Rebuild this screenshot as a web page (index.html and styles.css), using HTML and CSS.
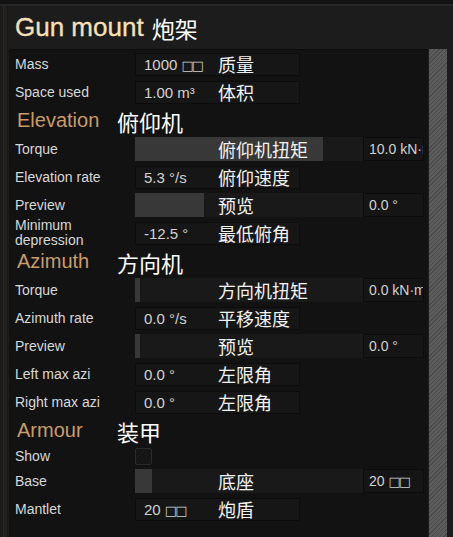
FILE: index.html
```html
<!DOCTYPE html>
<html lang="en">
<head>
    <meta charset="UTF-8">
    <meta name="viewport" content="width=device-width, initial-scale=1.0">
    <title>Gun mount</title>
    <link rel="stylesheet" href="styles.css">
</head>
<body>

<div class="topbar"></div>
<div class="screen">
    <div class="edge"></div>
    <div class="window">
        <h1 class="title">Gun mount <span class="cn">炮架</span></h1>

        <div class="content">
            <div class="list">
                <div class="row">
                    <div class="label">Mass</div>
                    <div class="ctrl">
                        <div class="field">1000 <span class="tofu">□□</span></div>
                        <div class="cn-label">质量</div>
                    </div>
                </div>
                <div class="row">
                    <div class="label">Space used</div>
                    <div class="ctrl">
                        <div class="field">1.00 m³</div>
                        <div class="cn-label">体积</div>
                    </div>
                </div>

                <div class="section">
                    <span class="section-name">Elevation</span>
                    <span class="section-cn">俯仰机</span>
                </div>
                <div class="row">
                    <div class="label">Torque</div>
                    <div class="ctrl slider-ctrl">
                        <div class="track"><div class="fill" style="width: 188px"></div></div>
                        <div class="cn-label">俯仰机扭矩</div>
                        <div class="num">10.0 kN·m</div>
                    </div>
                </div>
                <div class="row">
                    <div class="label">Elevation rate</div>
                    <div class="ctrl">
                        <div class="field">5.3 °/s</div>
                        <div class="cn-label">俯仰速度</div>
                    </div>
                </div>
                <div class="row">
                    <div class="label">Preview</div>
                    <div class="ctrl slider-ctrl">
                        <div class="track"><div class="fill" style="width: 69px"></div></div>
                        <div class="cn-label">预览</div>
                        <div class="num">0.0 °</div>
                    </div>
                </div>
                <div class="row">
                    <div class="label two-line">Minimum<br>depression</div>
                    <div class="ctrl">
                        <div class="field">-12.5 °</div>
                        <div class="cn-label">最低俯角</div>
                    </div>
                </div>

                <div class="section">
                    <span class="section-name">Azimuth</span>
                    <span class="section-cn">方向机</span>
                </div>
                <div class="row">
                    <div class="label">Torque</div>
                    <div class="ctrl slider-ctrl">
                        <div class="track"><div class="fill" style="width: 5px"></div></div>
                        <div class="cn-label">方向机扭矩</div>
                        <div class="num">0.0 kN·m</div>
                    </div>
                </div>
                <div class="row">
                    <div class="label">Azimuth rate</div>
                    <div class="ctrl">
                        <div class="field">0.0 °/s</div>
                        <div class="cn-label">平移速度</div>
                    </div>
                </div>
                <div class="row">
                    <div class="label">Preview</div>
                    <div class="ctrl slider-ctrl">
                        <div class="track"><div class="fill" style="width: 5px"></div></div>
                        <div class="cn-label">预览</div>
                        <div class="num">0.0 °</div>
                    </div>
                </div>
                <div class="row">
                    <div class="label">Left max azi</div>
                    <div class="ctrl">
                        <div class="field">0.0 °</div>
                        <div class="cn-label">左限角</div>
                    </div>
                </div>
                <div class="row">
                    <div class="label">Right max azi</div>
                    <div class="ctrl">
                        <div class="field">0.0 °</div>
                        <div class="cn-label">左限角</div>
                    </div>
                </div>

                <div class="section">
                    <span class="section-name">Armour</span>
                    <span class="section-cn">装甲</span>
                </div>
                <div class="row row-check">
                    <div class="label">Show</div>
                    <div class="checkbox"></div>
                </div>
                <div class="row">
                    <div class="label">Base</div>
                    <div class="ctrl slider-ctrl">
                        <div class="track"><div class="fill" style="width: 17px"></div></div>
                        <div class="cn-label">底座</div>
                        <div class="num">20 <span class="tofu">□□</span></div>
                    </div>
                </div>
                <div class="row">
                    <div class="label">Mantlet</div>
                    <div class="ctrl">
                        <div class="field">20 <span class="tofu">□□</span></div>
                        <div class="cn-label">炮盾</div>
                    </div>
                </div>
            </div>
            <div class="scrollbar"></div>
        </div>
    </div>
</div>

</body>
</html>
```

FILE: styles.css
```css
html, body {
    height: 100%;
}
body {
    margin: 0;
    background: #1d1d1d;
    font-family: "Liberation Sans", Arial, "Noto Sans CJK SC", sans-serif;
    color: #d6d6d6;
    display: flex;
    flex-direction: column;
    overflow: hidden;
}
.topbar {
    height: 4px;
    background: #121212;
    border-bottom: 2px solid #262626;
    flex: none;
}
.screen {
    flex: 1;
    display: flex;
    min-height: 0;
}
.edge {
    width: 7px;
    flex: none;
    background: linear-gradient(90deg, #1b1b1b 0 3px, #2a2724 3px 4px, #221f1c 4px);
    border-right: 1px solid #171717;
}
.window {
    flex: 1;
    display: flex;
    flex-direction: column;
    background: #1c1c1c;
}
.title {
    margin: 0;
    height: 43px;
    padding-left: 7px;
    display: flex;
    align-items: center;
    font-size: 26px;
    font-weight: normal;
    color: #f7e0b8;
    white-space: pre;
    -webkit-text-stroke: 0.3px #f7e0b8;
}
.title .cn {
    font-family: "Noto Sans CJK SC", sans-serif;
    font-size: 23px;
    color: #ffffff;
    -webkit-text-stroke: 0;
    margin-left: 1px;
}
.content {
    flex: 1;
    display: flex;
    min-height: 0;
}
.list {
    flex: 1;
    margin-left: 1px;
    padding: 3px 0 0 6px;
    background: #121212;
    border-radius: 3px 0 0 0;
    box-shadow: inset 0 1px 0 #0b0b0b;
    overflow: hidden;
}
.scrollbar {
    width: 18px;
    flex: none;
    margin: 0 6px 0 1px;
    background: repeating-linear-gradient(-45deg, #5c5c5c 0 2px, #4c4c4c 2px 3px);
}
.row {
    display: flex;
    align-items: center;
    height: 24px;
    margin-bottom: 4px;
}
.label {
    width: 120px;
    flex: none;
    font-size: 14px;
    color: #d8d8d8;
    white-space: nowrap;
}
.label.two-line {
    line-height: 15px;
    white-space: normal;
}
.ctrl {
    display: grid;
    grid-template-columns: 83px 82px;
    grid-template-rows: 24px;
    align-items: center;
}
.field {
    grid-column: 1 / 3;
    grid-row: 1;
    height: 23px;
    box-sizing: border-box;
    padding-left: 8px;
    background: #161616;
    border: 1px solid #0c0c0c;
    font-size: 15px;
    line-height: 21px;
    color: #d2d2d2;
    white-space: nowrap;
}
.cn-label {
    grid-column: 2;
    grid-row: 1;
    font-family: "Noto Sans CJK SC", sans-serif;
    font-size: 18px;
    line-height: 24px;
    color: #f2f2f2;
    white-space: nowrap;
    position: relative;
}
.slider-ctrl {
    grid-template-columns: 83px 145px 61px;
}
.track {
    grid-column: 1 / 3;
    grid-row: 1;
    height: 24px;
    background: #191919;
}
.fill {
    height: 100%;
    background: #383838;
}
.num {
    grid-column: 3;
    grid-row: 1;
    height: 24px;
    box-sizing: border-box;
    padding-left: 5px;
    background: #151515;
    border: 1px solid #0c0c0c;
    font-size: 14px;
    line-height: 22px;
    color: #d2d2d2;
    white-space: nowrap;
    overflow: hidden;
}
.tofu {
    font-family: "DejaVu Sans", sans-serif;
    font-size: 13px;
    letter-spacing: -2px;
    color: #cfcfcf;
}
.section {
    display: flex;
    align-items: center;
    height: 25px;
    margin-bottom: 4px;
    padding-left: 2px;
}
.section-name {
    width: 100px;
    flex: none;
    font-size: 20px;
    color: #c99c68;
}
.section-cn {
    font-family: "Noto Sans CJK SC", sans-serif;
    font-size: 22px;
    color: #ffffff;
}
.row-check {
    height: 18px;
}
.checkbox {
    width: 17px;
    height: 17px;
    box-sizing: border-box;
    background: repeating-linear-gradient(-45deg, #141414 0 2px, #1a1a1a 2px 3px);
    border: 1px solid #2a2a2a;
    border-radius: 2px;
}
```
